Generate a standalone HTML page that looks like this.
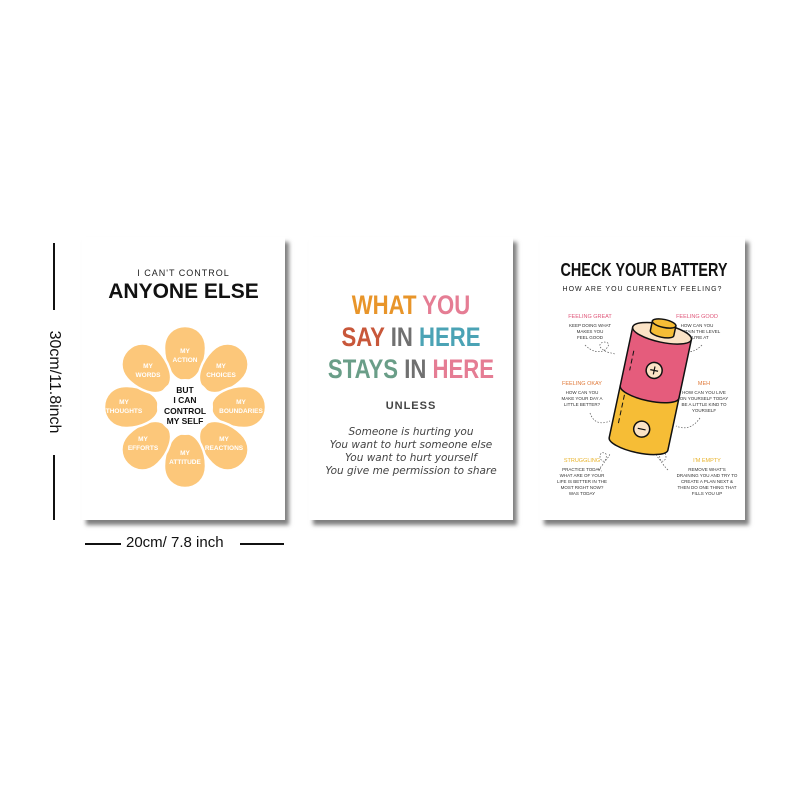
<!DOCTYPE html>
<html><head><meta charset="utf-8"><style>
html,body{margin:0;padding:0;background:#fff;width:800px;height:800px;overflow:hidden;font-family:"Liberation Sans",sans-serif}
.card{position:absolute;background:#fff;box-shadow:4px 5px 4px rgba(0,0,0,.5);}
.abs{position:absolute}
</style></head><body>
<div class="abs" style="left:53px;top:243px;width:2px;height:277px;background:#111"></div>
<div class="abs" style="left:40px;top:310px;width:28px;height:145px;background:#fff"></div>
<div class="abs" style="left:54px;top:382px;transform:translate(-50%,-50%) rotate(90deg);font-size:16px;color:#111;white-space:nowrap">30cm/11.8inch</div>
<div class="abs" style="left:85px;top:543px;width:36px;height:1.5px;background:#111"></div>
<div class="abs" style="left:240px;top:543px;width:44px;height:1.5px;background:#111"></div>
<div class="abs" style="left:126px;top:534px;font-size:15px;color:#111;white-space:nowrap">20cm/ 7.8 inch</div>

<div class="card" style="left:82px;top:237px;width:203px;height:283px"></div>
<div class="abs" style="left:82px;top:268px;width:203px;text-align:center;font-size:9px;letter-spacing:1px;color:#222">I CAN'T CONTROL</div>
<div class="abs" style="left:82px;top:280px;width:203px;text-align:center;font-size:21px;font-weight:bold;color:#111">ANYONE ELSE</div>
<svg class="abs" style="left:0;top:0" width="800" height="800">
<g fill="#fcc77a" stroke="#fff" stroke-width="2.5">
<path id="pt" d="M185 381 C170 381 164 360 164 348 C164 334 174 326 185 326 C196 326 206 334 206 348 C206 360 200 381 185 381 Z"/>
<use href="#pt" transform="rotate(45 185 407)"/>
<use href="#pt" transform="rotate(90 185 407)"/>
<use href="#pt" transform="rotate(135 185 407)"/>
<use href="#pt" transform="rotate(180 185 407)"/>
<use href="#pt" transform="rotate(225 185 407)"/>
<use href="#pt" transform="rotate(270 185 407)"/>
<use href="#pt" transform="rotate(315 185 407)"/>
</g>
<circle cx="185" cy="407" r="28" fill="#fff"/>
<g font-family="Liberation Sans" font-size="6.5" fill="#fff" text-anchor="middle" font-weight="bold">
<text x="185" y="353">MY</text><text x="185" y="362">ACTION</text>
<text x="148" y="368">MY</text><text x="148" y="377">WORDS</text>
<text x="221" y="368">MY</text><text x="221" y="377">CHOICES</text>
<text x="124" y="404">MY</text><text x="124" y="413">THOUGHTS</text>
<text x="241" y="404">MY</text><text x="241" y="413">BOUNDARIES</text>
<text x="143" y="441">MY</text><text x="143" y="450">EFFORTS</text>
<text x="224" y="441">MY</text><text x="224" y="450">REACTIONS</text>
<text x="185" y="455">MY</text><text x="185" y="464">ATTITUDE</text>
</g>
<g font-family="Liberation Sans" font-size="8.5" fill="#111" text-anchor="middle" font-weight="bold">
<text x="185" y="393">BUT</text><text x="185" y="403">I CAN</text><text x="185" y="414">CONTROL</text><text x="185" y="424">MY SELF</text>
</g>
</svg>

<div class="card" style="left:309px;top:237px;width:204px;height:283px"></div>
<div class="abs" style="left:309px;top:289px;width:204px;text-align:center;font-size:27px;line-height:32px;font-weight:bold;transform:scaleX(0.82);transform-origin:center;white-space:nowrap">
<span style="color:#e8952a">WHAT</span> <span style="color:#e57d94">YOU</span><br>
<span style="color:#c8573a">SAY</span> <span style="color:#707070">IN</span> <span style="color:#4ba3b5">HERE</span><br>
<span style="color:#6a9e88">STAYS</span> <span style="color:#707070">IN</span> <span style="color:#e57d94">HERE</span></div>
<div class="abs" style="left:309px;top:400px;width:204px;text-align:center;font-size:11px;font-weight:bold;letter-spacing:1px;color:#444">UNLESS</div>
<div class="abs" style="left:309px;top:426px;width:204px;text-align:center;font-size:10.5px;line-height:13px;font-style:italic;color:#444;font-family:'DejaVu Sans',sans-serif;font-weight:300">Someone is hurting you<br>You want to hurt someone else<br>You want to hurt yourself<br>You give me permission to share</div>

<div class="card" style="left:540px;top:237px;width:205px;height:283px"></div>
<div class="abs" style="left:540px;top:260px;width:205px;text-align:center;font-size:18px;font-weight:bold;color:#111;transform:scaleX(0.8);white-space:nowrap">CHECK YOUR BATTERY</div>
<div class="abs" style="left:540px;top:286px;width:205px;text-align:center;font-size:7px;letter-spacing:1px;color:#222">HOW ARE YOU CURRENTLY FEELING?</div>
<svg class="abs" style="left:0;top:0" width="800" height="800">
<g font-family="Liberation Sans" font-size="5.5" text-anchor="middle">
<text x="590" y="318" fill="#e0577a">FEELING GREAT</text>
<text x="697" y="318" fill="#e0577a">FEELING GOOD</text>
<text x="582" y="385" fill="#e07a3a">FEELING OKAY</text>
<text x="704" y="385" fill="#e07a3a">MEH</text>
<text x="582" y="462" fill="#e8b22a">STRUGGLING</text>
<text x="707" y="462" fill="#e8b22a">I'M EMPTY</text>
</g>
<g fill="#333" font-family="Liberation Sans" font-size="4.5" text-anchor="middle">
<text x="590" y="327">KEEP DOING WHAT</text><text x="590" y="333">MAKES YOU</text><text x="590" y="339">FEEL GOOD</text>
<text x="697" y="327">HOW CAN YOU</text><text x="697" y="333">MAINTAIN THE LEVEL</text><text x="697" y="339">YOU'RE AT</text>
<text x="582" y="394">HOW CAN YOU</text><text x="582" y="400">MAKE YOUR DAY A</text><text x="582" y="406">LITTLE BETTER?</text>
<text x="704" y="394">HOW CAN YOU LIVE</text><text x="704" y="400">ON YOURSELF TODAY</text><text x="704" y="406">BE A LITTLE KIND TO</text><text x="704" y="412">YOURSELF</text>
<text x="582" y="471">PRACTICE TODAY,</text><text x="582" y="477">WHAT ARE OF YOUR</text><text x="582" y="483">LIFE IS BETTER IN THE</text><text x="582" y="489">MOST RIGHT NOW?</text><text x="582" y="495">WAS TODAY</text>
<text x="707" y="471">REMOVE WHAT'S</text><text x="707" y="477">DRAINING YOU AND TRY TO</text><text x="707" y="483">CREATE A PLAN NEXT &amp;</text><text x="707" y="489">THEN DO ONE THING THAT</text><text x="707" y="495">FILLS YOU UP</text>
</g>
<g fill="none" stroke="#555" stroke-width="0.7" stroke-dasharray="1.5,1.5">
<path d="M585 345 q10 10 20 5 q8 -8 -2 -8 q-8 4 4 10 l8 2"/>
<path d="M702 345 q-10 10 -18 5 q-6 -8 2 -6 q6 4 -4 10 l-8 4"/>
<path d="M590 413 q5 14 20 8"/>
<path d="M700 418 q-10 14 -24 8"/>
<path d="M598 470 q10 -10 8 -16 q-6 -4 -6 4 q4 8 10 -4"/>
<path d="M668 470 q-10 -10 -8 -16 q6 -4 6 4 q-4 8 -10 -4"/>
</g>
<g transform="rotate(12 650 390)" stroke="#111" stroke-width="1.5">
<path d="M620 392 L620 445 A30 9 0 0 0 680 445 L680 392 Z" fill="#f6bd36"/>
<path d="M620 332 L620 392 A30 9 0 0 0 680 392 L680 332 Z" fill="#e55c7c"/>
<ellipse cx="650" cy="332" rx="30" ry="9" fill="#fbe3c6"/>
<path d="M638 322 L638 332 A12 4 0 0 0 662 332 L662 322 Z" fill="#f6bd36"/>
<ellipse cx="650" cy="322" rx="12" ry="4" fill="#f6bd36"/>
<circle cx="650" cy="370" r="8" fill="#fbe3c6"/>
<circle cx="650" cy="430" r="8" fill="#fbe3c6"/>
<path d="M650 366 v8 M646 370 h8 M646 430 h8" stroke-width="1.2"/>
<path d="M626 355 v20 M626 400 v30" stroke-dasharray="5,3" stroke-width="1"/>
</g>
</svg>
</body></html>
